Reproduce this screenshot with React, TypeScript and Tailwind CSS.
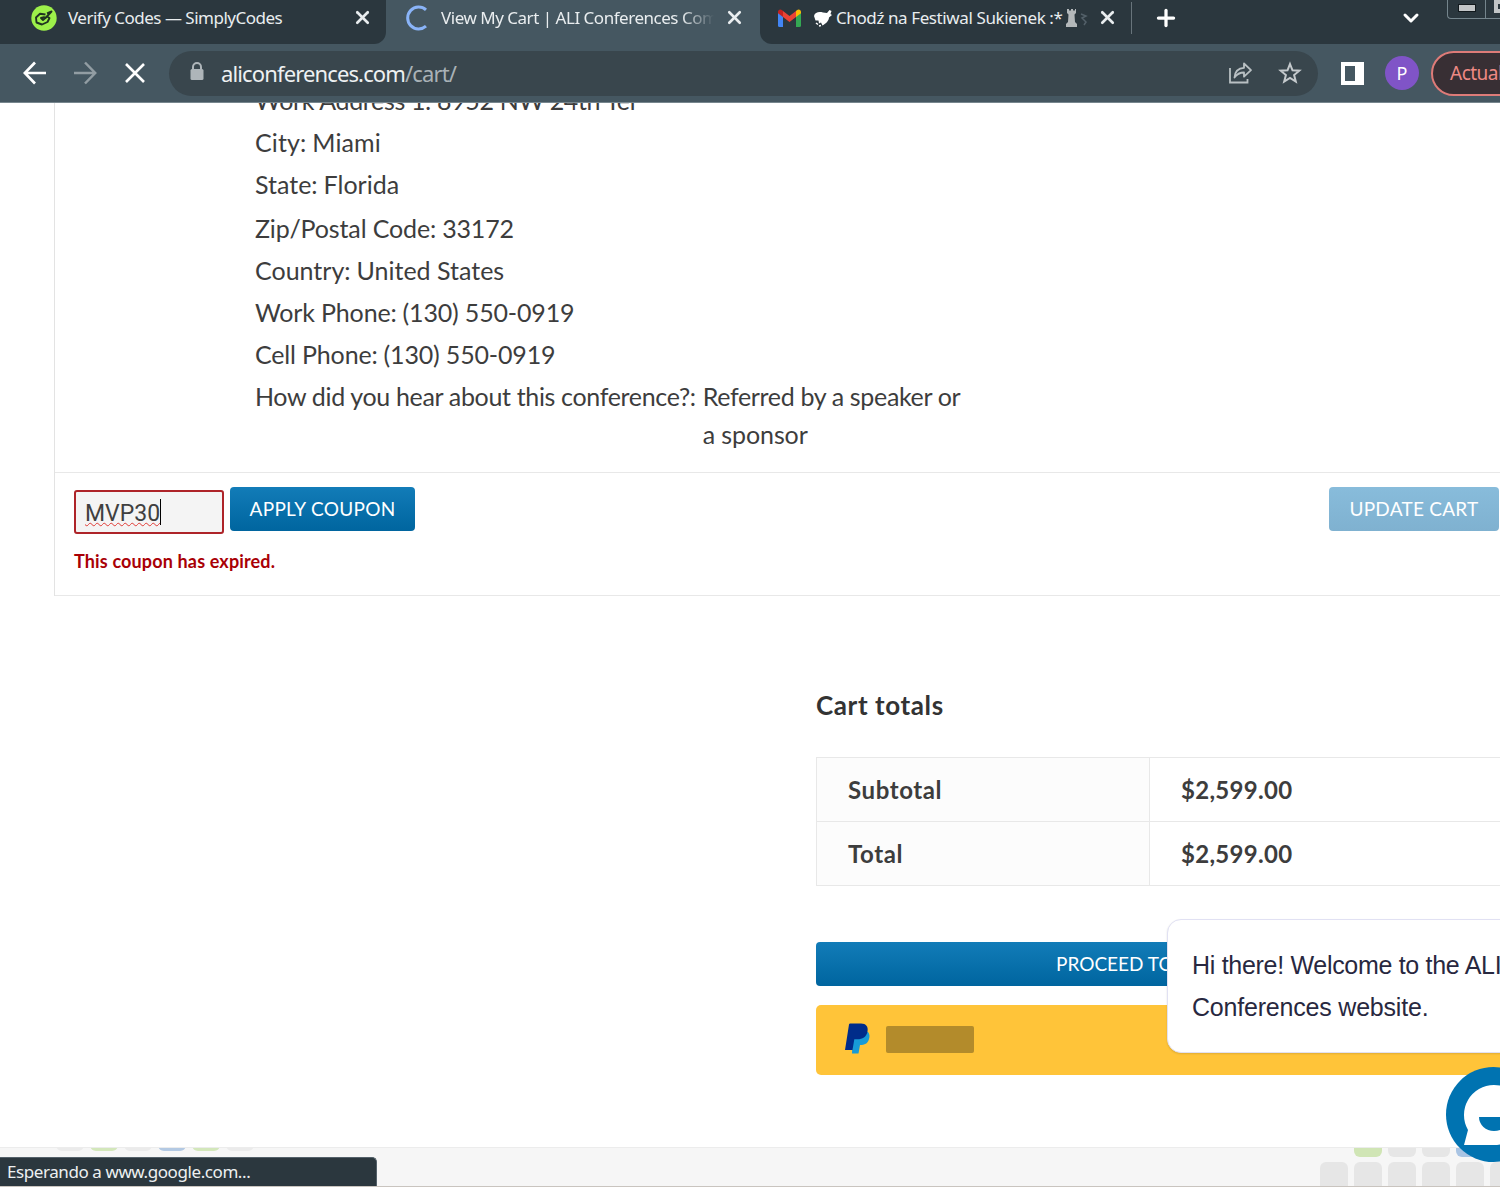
import React from "react";
import { ChevronDown, Plus, X } from "lucide-react";

type Detail = {
  label: string;
  value: string;
  className: string;
};

const details: Detail[] = [
  { label: "Work Address 1:", value: "8952 NW 24th Ter", className: "mb-1 tracking-[-0.35px]" },
  { label: "City:", value: "Miami", className: "mb-1 tracking-[0.1px]" },
  { label: "State:", value: "Florida", className: "mb-[6px]" },
  { label: "Zip/Postal Code:", value: "33172", className: "mb-1 tracking-[-0.13px]" },
  { label: "Country:", value: "United States", className: "mb-1" },
  { label: "Work Phone:", value: "(130) 550-0919", className: "mb-1 tracking-[-0.16px]" },
  { label: "Cell Phone:", value: "(130) 550-0919", className: "mb-1 tracking-[-0.16px]" },
];

const totals = [
  { label: "Subtotal", value: "$2,599.00" },
  { label: "Total", value: "$2,599.00" },
];

const leftTiles = ["bg-[#ebebeb]", "bg-[#d3e7bb]", "bg-[#ebebeb]", "bg-[#b3c9e3]", "bg-[#d3e7bb]", "bg-[#ebebeb]"];
const rightTiles = ["bg-transparent", "bg-[#d0e5b5]", "bg-[#e6e6e6]", "bg-[#e6e6e6]", "bg-[#a9c4e3]", "bg-[#e6e6e6]"];

function TabStrip() {
  return (
    <div className="flex h-11 bg-[#455761] text-[17px] text-[#e9edef]">
      <div className="flex h-11 w-[386px] shrink-0 items-center rounded-br-[12px] bg-[#2b373e] pb-[9px] pl-[31px]">
        <svg width="26" height="26" viewBox="0 0 26 26" className="shrink-0">
          <circle cx="13" cy="13" r="12.7" fill="#9df04a" />
          <path
            d="M14.500 9.500 9 8.800 5 12.500l.5 5 5.500 2 5.500-2.500 2-4-2.500-1.500-4 3.500-2-2 3-.8 1.500.8 6-6.500-4.500 1.800"
            fill="none"
            stroke="#203321"
            strokeWidth="1.900"
            strokeLinejoin="round"
          />
        </svg>
        <span className="ml-[11px] w-[280px] shrink-0 whitespace-nowrap tracking-[-0.5px]">Verify Codes — SimplyCodes</span>
        <X size={21} strokeWidth={3} className="ml-1 shrink-0" />
      </div>

      <div className="flex h-11 w-[374px] shrink-0 items-center pb-[9px] pl-[17px]">
        <svg width="26" height="26" viewBox="0 0 26 26" className="shrink-0">
          <path d="M23 4.800A11 11 0 1 0 23 21.200" fill="none" stroke="#8ab4f8" strokeWidth="3" />
        </svg>
        <span className="ml-3 w-[273px] shrink-0 overflow-hidden whitespace-nowrap tracking-[-0.48px] [mask-image:linear-gradient(to_right,black_88%,transparent_100%)]">
          View My Cart | ALI Conferences Com
        </span>
        <X size={21} strokeWidth={3} className="ml-[10px] shrink-0" />
      </div>

      <div className="flex h-11 flex-1 items-center rounded-bl-[12px] bg-[#2b373e] pb-[9px] pl-[18px]">
        <svg width="23" height="18" viewBox="0 0 23 18" className="shrink-0">
          <path d="M0 3v13.500Q0 18 1.500 18H5V6z" fill="#4285f4" />
          <path d="M18 6v12h3.500q1.500 0 1.500-1.500V3z" fill="#34a853" />
          <path d="M18 2v6l5-3.800V3c0-2.500-2.500-3.500-4.200-1.700z" fill="#fbbc04" />
          <path d="M5 2l6.500 5L18 2v6l-6.500 5L5 8z" fill="#ea4335" />
          <path d="M0 3v1.200L5 8V2l-.8-.7C2.500-.5 0 .5 0 3z" fill="#c5221f" />
        </svg>
        <svg width="18" height="18" viewBox="0 0 18 18" className="ml-[13px] shrink-0">
          <path d="M0 7c1-4 5-4.500 9-3.500l4 .5 2.500-3 2 1-1 3 1.500 1-3 2.500c0 3-3 6-6.500 8l-1.500-3-2 1-.5-3H1.500z" fill="#fff" />
          <path d="m2 14 2 1.500m1 1.500 2-.5" stroke="#fff" strokeWidth="1.500" />
        </svg>
        <span className="ml-1 w-[226px] shrink-0 whitespace-nowrap tracking-[-0.4px]">Chodź na Festiwal Sukienek :*</span>
        <svg width="24" height="20" viewBox="0 0 24 20" className="ml-[3px] shrink-0">
          <path d="M2 1h2v1.500h2V1h2v1.500h2V1h1v4L9.500 6.500 10 14l2 2v3H1v-3l2-2 .5-7.500L2 5z" fill="#b4b8ba" />
          <path d="M16 6l5 2-4 2 4 4-2 3" fill="none" stroke="#536069" strokeWidth="1.500" />
        </svg>
        <X size={21} strokeWidth={3} className="ml-[8px] shrink-0" />
        <div className="ml-[13px] h-8 w-px shrink-0 bg-[#68747b]" />
        <Plus size={26} strokeWidth={3} className="ml-[21px] shrink-0 text-white" />
        <ChevronDown size={24} strokeWidth={3} className="ml-[220px] shrink-0 text-white" />
        <div className="ml-[24px] flex h-[19px] w-[54px] shrink-0 self-start rounded-bl-[4px] border-b border-l border-[#75858d]">
          <div className="flex w-[38px] shrink-0 justify-center border-r border-[#75858d] pt-[5px]">
            <div className="h-[6px] w-4 bg-[#c2c5c7] outline-1 outline-[#12191d]" />
          </div>
          <div className="ml-[8px] h-[13px] w-3 shrink-0 border-[4px] border-[#c2c5c7]" />
        </div>
      </div>
    </div>
  );
}

function Toolbar() {
  return (
    <div className="flex h-[59px] items-center border-b border-[#77868e] bg-[#455761] pl-[23px]">
      <svg width="24" height="24" viewBox="0 0 24 24" fill="none" stroke="#fff" strokeWidth="2.700" className="shrink-0">
        <path d="M23 12H2M12 1.500 1.800 12 12 22.500" />
      </svg>
      <svg width="24" height="24" viewBox="0 0 24 24" fill="none" stroke="#929da3" strokeWidth="2.500" className="ml-[26px] shrink-0">
        <path d="M1 12h21M12 1.500 22.200 12 12 22.500" />
      </svg>
      <svg width="22" height="22" viewBox="0 0 22 22" fill="none" stroke="#fff" strokeWidth="2.600" className="ml-[27px] shrink-0">
        <path d="m2 2 18 18M20 2 2 20" />
      </svg>

      <div className="ml-[23px] flex h-[45px] w-[1149px] shrink-0 items-center rounded-full bg-[#39464d] pl-[21px]">
        <svg width="14" height="20" viewBox="0 0 14 20" className="mb-[3px] shrink-0">
          <path d="M3 8V5a4 4 0 0 1 8 0v3" fill="none" stroke="#aeb5b9" strokeWidth="2" />
          <rect x="0.500" y="7" width="13" height="11" rx="1.500" fill="#aeb5b9" />
        </svg>
        <span className="ml-[17px] w-[1007px] shrink-0 whitespace-nowrap text-[22px] tracking-[-0.87px] text-[#eef1f2]">
          aliconferences.com<span className="text-[#a9b2b7]">/cart/</span>
        </span>
        <svg width="25" height="24" viewBox="0 0 25 24" fill="none" stroke="#b9c0c3" strokeWidth="1.800" className="shrink-0">
          <path d="M2 7v14.500h17.500V18" />
          <path d="M6.500 16.500C7 10 11 7 16 6.800V2.500l7 6.700-7 6.500v-4.200c-4 0-7 1.500-9.500 5z" strokeLinejoin="round" />
        </svg>
        <svg width="24" height="24" viewBox="0 0 24 24" fill="none" stroke="#c5cacd" strokeWidth="2" className="ml-[25px] shrink-0">
          <path d="m12 3 2.500 6.300 6.800.4-5.200 4.300 1.700 6.600-5.800-3.700-5.800 3.700 1.700-6.600-5.200-4.300 6.800-.4z" />
        </svg>
      </div>

      <svg width="23" height="23" viewBox="0 0 23 23" className="ml-[23px] shrink-0">
        <path d="M0 0h23v23H0zM4 4v15h10V4z" fill="#fff" fillRule="evenodd" />
      </svg>
      <div className="ml-[21px] flex size-[34px] shrink-0 items-center justify-center rounded-full bg-[#8054c7] text-[18px] text-white">
        P
      </div>
      <div className="ml-3 flex h-[45px] w-[120px] shrink-0 items-center rounded-full border-2 border-[#de7b78] bg-[#382f34] pl-[17px] text-[19px] tracking-[-0.5px] text-[#ee8984]">
        Actualizar
      </div>
    </div>
  );
}

function CouponRow() {
  return (
    <div className="h-[124px] border-y border-[#e8e8e8] pl-[19px] pt-[14px]">
      <div className="flex items-start">
        <div className="mt-[3px] flex h-[44px] w-[150px] items-center rounded-[3px] border-2 border-[#ae2429] bg-[#f4f4f4] pl-[9px] pt-[4px] text-[#404040]">
          <span className="relative font-['Roboto',sans-serif] text-[23px] leading-[26px] underline decoration-[#e03a35] decoration-wavy decoration-1 underline-offset-[1px]">
            MVP30
          </span>
          <div className="mb-1 h-[26px] w-px bg-black" />
        </div>
        <button className="ml-[6px] h-[44px] w-[185px] rounded-[4px] bg-linear-to-b from-[#127cb8] to-[#00659f] text-[19px] tracking-[0.3px] text-white">
          APPLY COUPON
        </button>
        <button className="ml-[914px] h-[44px] w-[170px] shrink-0 rounded-[4px] bg-linear-to-b from-[#88bcdb] to-[#7fb1d0] text-[19px] tracking-[0.25px] text-white">
          UPDATE CART
        </button>
      </div>
      <p className="mt-[14px] whitespace-nowrap text-[18px] font-bold leading-[27px] tracking-[0.15px] text-[#a90006]">
        This coupon has expired.
      </p>
    </div>
  );
}

function CartTotals() {
  return (
    <section className="ml-[816px] mt-[89px] w-[700px]">
      <h2 className="text-[26px] font-bold leading-10 tracking-[0.6px] text-[#333]">Cart totals</h2>
      <div className="mt-8 border-l border-t border-[#e8e8e8]">
        {totals.map((row) => (
          <div key={row.label} className="flex h-16 items-center border-b border-[#e8e8e8] text-[24px] font-bold text-[#3d3d3d]">
            <div className="flex h-full w-[333px] items-center border-r border-[#e8e8e8] bg-[#fcfcfc] pl-[31px] tracking-[0.6px]">
              {row.label}
            </div>
            <div className="pl-[31px] tracking-[0.3px]">{row.value}</div>
          </div>
        ))}
      </div>
      <button className="mt-14 h-[44px] w-full rounded-[4px] bg-linear-to-b from-[#127cb8] to-[#00659f] pl-[240px] text-left text-[19px] text-white">
        PROCEED TO
      </button>
      <div className="mt-[19px] flex h-[70px] items-center rounded-[5px] bg-[#ffc439] pb-[4px] pl-[29px]">
        <svg width="26" height="31" viewBox="0 0 26 31">
          <path d="M8 9h12l3 0c1.500 2 2 4 1 7-1 4.500-4.500 6-9 6l-1.500 8.500H7z" fill="#179bd7" />
          <path d="M4 1.500Q4.200.5 5.200.5H16c5 0 7.500 3 6.500 8-1.100 5.500-5 7.800-10 7.800H9.300L7.500 27H0z" fill="#002c8a" />
        </svg>
        <div className="ml-[15px] mt-[2px] h-[27px] w-[88px] rounded-[2px] bg-[#b38b2b]" />
      </div>
    </section>
  );
}

function PageFooter() {
  return (
    <footer className="flex h-10 justify-between overflow-hidden border-b border-t border-b-[#c9c4bf] border-t-[#ececec] bg-[#f6f6f6]">
      <div className="ml-[56px] flex gap-[6px]">
        {leftTiles.map((tile, i) => (
          <div key={i} className={`-mt-6 h-[27px] w-7 rounded-[6px] ${tile}`} />
        ))}
      </div>
      <div className="-mr-[18px] flex flex-col gap-[5px]">
        <div className="flex gap-[6px]">
          {rightTiles.map((tile, i) => (
            <div key={i} className={`h-[9px] w-7 rounded-b-[6px] ${tile}`} />
          ))}
        </div>
        <div className="flex gap-[6px]">
          {rightTiles.map((_, i) => (
            <div key={i} className="h-7 w-7 rounded-t-[6px] bg-[#e6e6e6]" />
          ))}
        </div>
      </div>
    </footer>
  );
}

export default function App() {
  return (
    <div className="relative flex h-[1187px] w-[1500px] flex-col overflow-hidden bg-white font-['Lato',sans-serif]">
      <header className="relative z-10 shrink-0 font-['Noto_Sans',sans-serif]">
        <TabStrip />
        <Toolbar />
      </header>

      <main className="h-[1044px] shrink-0 overflow-hidden">
        <div className="ml-[54px] w-[1500px] border-l border-[#e3e3e3]">
          <div className="h-[369px] overflow-hidden pl-[200px] text-[25px] leading-[38px] text-[#3d3d3d]">
            <dl className="-mt-[22px] whitespace-nowrap">
              {details.map((d) => (
                <div key={d.label} className={`flex gap-[6px] ${d.className}`}>
                  <dt>{d.label}</dt>
                  <dd>{d.value}</dd>
                </div>
              ))}
              <div className="flex gap-[7px] tracking-[-0.34px]">
                <dt>How did you hear about this conference?:</dt>
                <dd>
                  Referred by a speaker or
                  <br />
                  <span className="tracking-[-0.1px]">a sponsor</span>
                </dd>
              </div>
            </dl>
          </div>
          <CouponRow />
        </div>
        <CartTotals />
      </main>

      <PageFooter />

      {/* Chat greeting and launcher */}
      <div className="absolute left-[1167px] top-[919px] h-[134px] w-[380px] rounded-[14px] border border-[#e1e1f3] bg-white pl-6 pt-[24px] font-['Liberation_Sans',sans-serif] text-[25px] leading-[42px] text-[#282840] shadow-[0_1px_2px_rgba(0,0,0,0.12)]">
        <p className="whitespace-nowrap tracking-[-0.3px]">Hi there! Welcome to the ALI</p>
        <p className="tracking-[-0.2px]">Conferences website.</p>
      </div>
      <svg width="54" height="96" viewBox="0 0 54 96" className="absolute left-[1446px] top-[1066px]">
        <circle cx="47.500" cy="48.500" r="47.500" fill="#0073b1" />
        <path d="M48 19a30 30 0 0 0-26 45l-4 15h30a30 30 0 0 0 0-60z" fill="#fff" />
        <path d="M33 51h30a15 14 0 0 1-30 0z" fill="#0073b1" />
      </svg>

      {/* Browser status bubble */}
      <div className="absolute left-0 top-[1157px] h-[29px] w-[377px] rounded-tr-[5px] border-r border-t border-[#54616a] bg-[#2b373e] pl-[7px] font-['Noto_Sans',sans-serif] text-[17px] leading-7 tracking-[-0.42px] text-[#edf0f1]">
        Esperando a www.google.com...
      </div>
    </div>
  );
}
